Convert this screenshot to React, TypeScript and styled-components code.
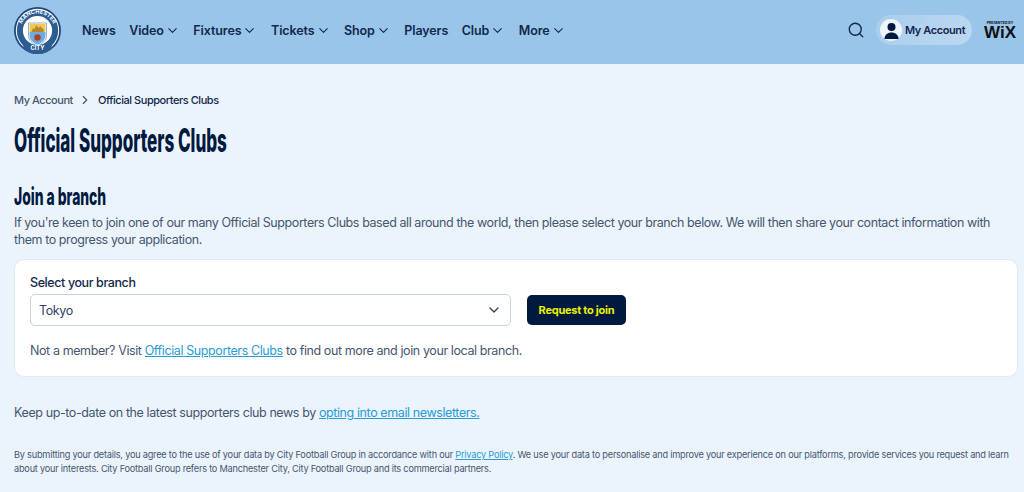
import React from "react";
import styled, { createGlobalStyle } from "styled-components";
import { ChevronDown, ChevronRight, Search } from "lucide-react";

const GlobalStyle = createGlobalStyle`
  html, body { margin: 0; padding: 0; background: #ebf4fd; }
  body {
    font-family: Inter, "Liberation Sans", sans-serif;
    color: #00193f;
    overflow: hidden;
  }
`;

const Page = styled.div`
  width: 1024px;
  height: 492px;
  overflow: hidden;
  background: #ebf4fd;
`;

const Header = styled.header`
  height: 64px;
  box-sizing: border-box;
  background: #98c5e9;
  display: flex;
  align-items: center;
  padding: 0 8px 4px 14px;
`;

const Nav = styled.nav`
  display: flex;
  align-items: center;
  gap: 13.5px;
  margin-left: 21px;
  flex: 1;
`;

const NavItem = styled.a`
  display: flex;
  align-items: center;
  font-size: 12.5px;
  font-weight: 600;
  letter-spacing: -0.1px;
  color: #12284c;

  svg {
    margin-left: 1px;
  }
`;

const Actions = styled.div`
  display: flex;
  align-items: center;
`;

const AccountPill = styled.div`
  width: 96px;
  height: 30px;
  margin-left: 11px;
  border-radius: 15px;
  background: linear-gradient(115deg, #a9cded, #bcd8f1);
  display: flex;
  align-items: center;
  gap: 3px;
  padding-left: 4px;
  box-sizing: border-box;
  font-size: 11px;
  font-weight: 600;
  letter-spacing: -0.4px;
  color: #12284c;
  white-space: nowrap;
`;

const Avatar = styled.span`
  width: 22px;
  height: 22px;
  border-radius: 50%;
  background: #eef5fc;
  display: flex;
  align-items: center;
  justify-content: center;
  flex: none;
`;

const WixMark = styled.div`
  margin-left: 12px;
  width: 32px;
  display: flex;
  flex-direction: column;
  align-items: center;
  color: #111;
`;

const WixSmall = styled.span`
  font-size: 3.5px;
  line-height: 5px;
  font-weight: 700;
  white-space: nowrap;
`;

const WixWord = styled.span`
  font-family: "Liberation Sans", sans-serif;
  font-size: 17px;
  line-height: 14px;
  font-weight: 700;
`;

const Main = styled.main`
  padding: 29px 6px 0 14px;
`;

const Breadcrumbs = styled.div`
  display: flex;
  align-items: center;
  height: 14px;
  font-size: 11px;
  font-weight: 500;
  letter-spacing: -0.45px;
  color: #12284c;
  gap: 5.5px;
`;

const CrumbLink = styled.span`
  color: #47566f;
`;

const Title = styled.h1`
  margin: 15px 0 0;
  height: 38px;
  font-size: 32px;
  line-height: 38px;
  font-weight: 800;
  color: #00193f;
  transform: scaleX(0.532);
  transform-origin: left center;
  white-space: nowrap;
`;

const Subtitle = styled.h2`
  margin: 24px 0 0;
  height: 26px;
  font-size: 24px;
  line-height: 26px;
  font-weight: 800;
  color: #00193f;
  transform: scaleX(0.578);
  transform-origin: left center;
  white-space: nowrap;
`;

const Intro = styled.p`
  margin: 4px 0 0;
  font-size: 12.5px;
  line-height: 17px;
  letter-spacing: -0.42px;
  color: #47566f;
  white-space: nowrap;
`;

const Card = styled.section`
  margin-top: 11px;
  height: 118px;
  box-sizing: border-box;
  background: #fff;
  border: 1px solid #e1ebf5;
  border-radius: 10px;
  padding: 15px 15px 0;
`;

const FieldLabel = styled.div`
  font-size: 12.5px;
  font-weight: 500;
  line-height: 16px;
  letter-spacing: -0.4px;
  color: #12284c;
`;

const FormRow = styled.div`
  display: flex;
  align-items: center;
  gap: 16px;
  margin-top: 3px;
`;

const SelectBox = styled.div`
  width: 481px;
  height: 32px;
  box-sizing: border-box;
  border: 1px solid #c6d3e1;
  border-radius: 5px;
  padding: 0 8px 0 8px;
  display: flex;
  align-items: center;
  justify-content: space-between;
  font-size: 12.5px;
  letter-spacing: -0.4px;
  color: #33435f;
`;

const JoinButton = styled.button`
  width: 99px;
  height: 30px;
  border: 0;
  border-radius: 5px;
  background: #00193f;
  color: #eaf100;
  font-family: inherit;
  font-size: 11px;
  font-weight: 700;
  letter-spacing: -0.25px;
  padding: 0;
`;

const Note = styled.p`
  margin: 16px 0 0;
  font-size: 12.5px;
  line-height: 17px;
  letter-spacing: -0.4px;
  color: #47566f;
`;

const TextLink = styled.a`
  color: #2a9bd5;
  text-decoration: underline;
`;

const Newsletter = styled.p`
  margin: 27px 0 0;
  font-size: 12.5px;
  line-height: 17px;
  letter-spacing: -0.4px;
  color: #47566f;
`;

const Legal = styled.p`
  margin: 27px 0 0;
  font-size: 9.2px;
  line-height: 14px;
  letter-spacing: -0.22px;
  color: #47566f;
`;

const Badge = () => (
  <svg width="47" height="47" viewBox="0 0 47 47" aria-label="Manchester City">
    <defs>
      <path id="badge-top" d="M6.500 23.500a17 17 0 0 1 34 0" />
    </defs>
    <circle cx="23.500" cy="23.500" r="23.500" fill="#1f4a7c" />
    <circle cx="23.500" cy="23.500" r="21.700" fill="#fff" />
    <circle cx="23.500" cy="23.500" r="20.700" fill="#2c5d92" />
    <circle cx="23.500" cy="23.500" r="14.600" fill="#fff" />
    <path d="M14.500 16h18v12.500c0 5-4 8-9 10.500-5-2.500-9-5.500-9-10.500z" fill="#fff" stroke="#2c5d92" strokeWidth="0.500" />
    <path d="M15.500 17h16v8h-16z" fill="#f4c74f" />
    <path d="M17.500 25l1.500-4 1.500 1 2-4 2 3 2-2 1 2 2 1v3z" fill="#b5862b" />
    <path d="M15.500 25h16v3.500c0 4.500-3.500 7-8 9.300-4.500-2.300-8-4.800-8-9.300z" fill="#6cade0" />
    <circle cx="23.500" cy="30.500" r="3.200" fill="#a8412e" />
    <text fontFamily="Inter, sans-serif" fontSize="5.600" fontWeight="700" fill="#fff">
      <textPath href="#badge-top" startOffset="50%" textAnchor="middle">MANCHESTER</textPath>
    </text>
    <path d="M11 37.500a17 17 0 0 0 25 0l2.500 3a20 20 0 0 1-30 0z" fill="#2c5d92" />
    <text fontFamily="Inter, sans-serif" fontSize="5.800" fontWeight="700" fill="#fff" x="23.500" y="43" textAnchor="middle">CITY</text>
  </svg>
);

const NAV_ITEMS: Array<{ label: string; menu?: boolean }> = [
  { label: "News" },
  { label: "Video", menu: true },
  { label: "Fixtures", menu: true },
  { label: "Tickets", menu: true },
  { label: "Shop", menu: true },
  { label: "Players" },
  { label: "Club", menu: true },
  { label: "More", menu: true },
];

export default function App() {
  return (
    <Page>
      <GlobalStyle />
      <Header>
        <Badge />
        <Nav>
          {NAV_ITEMS.map((item) => (
            <NavItem key={item.label}>
              {item.label}
              {item.menu && <ChevronDown size={15} strokeWidth={1.700} />}
            </NavItem>
          ))}
        </Nav>
        <Actions>
          <Search size={18} strokeWidth={1.800} color="#12284c" />
          <AccountPill>
            <Avatar>
              <svg width="17" height="17" viewBox="0 0 17 17">
                <circle cx="8.500" cy="5" r="4" fill="#00193f" />
                <path d="M1.500 17c0-4 3-6.500 7-6.500s7 2.500 7 6.500z" fill="#00193f" />
              </svg>
            </Avatar>
            My Account
          </AccountPill>
          <WixMark>
            <WixSmall>PRESENTED BY</WixSmall>
            <WixWord>WiX</WixWord>
          </WixMark>
        </Actions>
      </Header>
      <Main>
        <Breadcrumbs>
          <CrumbLink>My Account</CrumbLink>
          <ChevronRight size={14} color="#47566f" />
          <span>Official Supporters Clubs</span>
        </Breadcrumbs>
        <Title>Official Supporters Clubs</Title>
        <Subtitle>Join a branch</Subtitle>
        <Intro>
          If you're keen to join one of our many Official Supporters Clubs based all around the world, then please select your branch below. We will then share your contact information with
          <br />
          them to progress your application.
        </Intro>
        <Card>
          <FieldLabel>Select your branch</FieldLabel>
          <FormRow>
            <SelectBox>
              Tokyo
              <ChevronDown size={16} color="#33435f" />
            </SelectBox>
            <JoinButton>Request to join</JoinButton>
          </FormRow>
          <Note>
            Not a member? Visit <TextLink>Official Supporters Clubs</TextLink> to find out more and join your local branch.
          </Note>
        </Card>
        <Newsletter>
          Keep up-to-date on the latest supporters club news by <TextLink>opting into email newsletters.</TextLink>
        </Newsletter>
        <Legal>
          By submitting your details, you agree to the use of your data by City Football Group in accordance with our <TextLink>Privacy Policy</TextLink>. We use your data to personalise and improve your experience on our platforms, provide services you request and learn about your interests. City Football Group refers to Manchester City, City Football Group and its commercial partners.
        </Legal>
      </Main>
    </Page>
  );
}
